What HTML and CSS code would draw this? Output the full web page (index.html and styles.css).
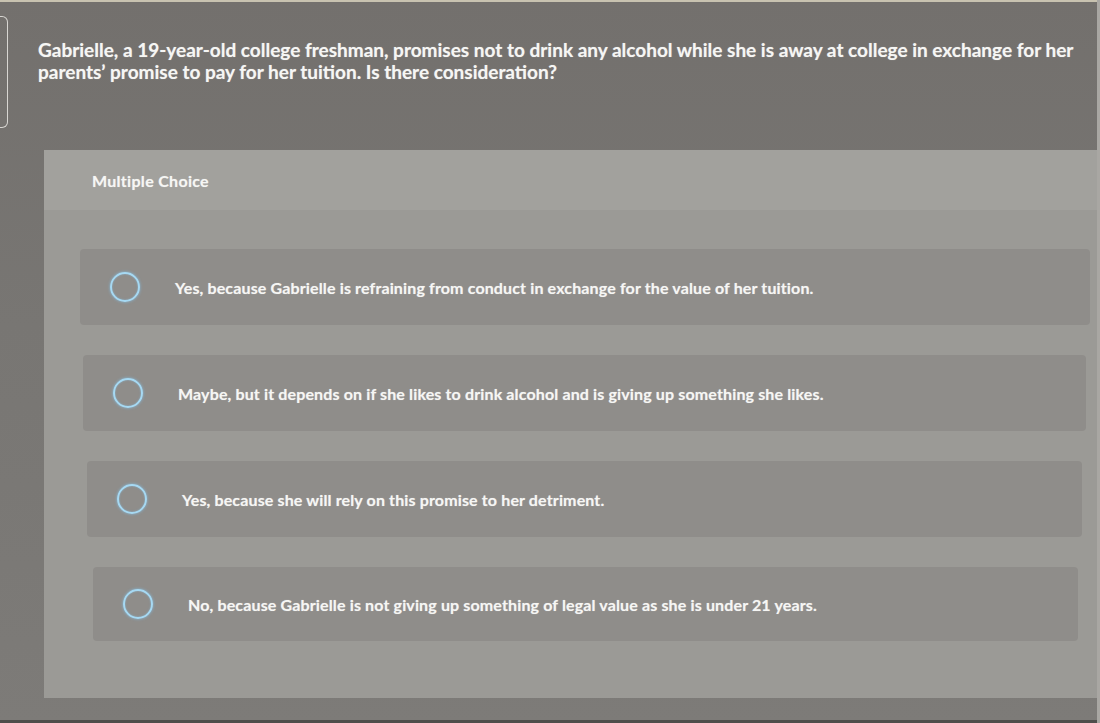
FILE: index.html
```html
<!DOCTYPE html>
<html lang="en">
<head>
<meta charset="utf-8">
<title>Multiple Choice</title>
<link rel="stylesheet" href="styles.css">
</head>
<body>
<div class="screen">
  <div class="top-edge"></div>
  <div class="header-row">
    <div class="tab"></div>
    <p class="question">Gabrielle, a 19-year-old college freshman, promises not to drink any alcohol while she is away at college in exchange for her parents’ promise to pay for her tuition. Is there consideration?</p>
  </div>
  <section class="panel">
    <div class="panel-head">Multiple Choice</div>
    <div class="options">
      <div class="option option-1"><span class="radio"></span><span class="label">Yes, because Gabrielle is refraining from conduct in exchange for the value of her tuition.</span></div>
      <div class="option option-2"><span class="radio"></span><span class="label">Maybe, but it depends on if she likes to drink alcohol and is giving up something she likes.</span></div>
      <div class="option option-3"><span class="radio"></span><span class="label">Yes, because she will rely on this promise to her detriment.</span></div>
      <div class="option option-4"><span class="radio"></span><span class="label">No, because Gabrielle is not giving up something of legal value as she is under 21 years.</span></div>
    </div>
  </section>
  <div class="bottom-edge"></div>
</div>
</body>
</html>
```

FILE: styles.css
```css
html, body {
  margin: 0;
  padding: 0;
}
body {
  width: 1100px;
  height: 723px;
  overflow: hidden;
  background: #6f6d6a;
  font-family: Lato, "Open Sans", "Liberation Sans", sans-serif;
  color: #f6f6f4;
}
.screen {
  width: 1097px;
  height: 723px;
  border-right: 3px solid #a9a7a3;
  background: linear-gradient(180deg, #73706d 0%, #787673 45%, #7d7b78 100%);
  display: flex;
  flex-direction: column;
}
.top-edge {
  height: 2px;
  background: #c8c2b0;
  flex: none;
}
.header-row {
  display: flex;
  height: 148px;
  flex: none;
}
.tab {
  flex: none;
  width: 7px;
  height: 110px;
  margin-top: 14px;
  border: 1.5px solid #d8d6d2;
  border-left: none;
  border-radius: 0 6px 6px 0;
}
.question {
  margin: 0 0 0 30px;
  padding-top: 37px;
  font-size: 19px;
  line-height: 22px;
  font-weight: 700;
  letter-spacing: 0;
  width: 1050px;
  text-shadow: 0 0 1px rgba(255,255,255,0.45);
}
.panel {
  margin-left: 44px;
  width: 1053px;
  height: 548px;
  flex: none;
  background: #9b9a96;
  display: flex;
  flex-direction: column;
}
.panel-head {
  height: 60px;
  flex: none;
  background: #a2a19d;
  display: flex;
  align-items: center;
  padding-left: 48px;
  font-size: 16px;
  font-weight: 700;
  letter-spacing: 0.3px;
  text-shadow: 0 0 1px rgba(255,255,255,0.45);
}
.options {
  display: flex;
  flex-direction: column;
  gap: 30px;
  padding-top: 39px;
}
.option {
  height: 76px;
  background: #8f8d8a;
  border-radius: 4px;
  display: flex;
  align-items: center;
}
.option-1 { margin: 0 7px 0 36px; }
.option-2 { margin: 0 11px 0 39px; }
.option-3 { margin: 0 15px 0 43px; }
.option-4 { margin: 0 19px 0 49px; height: 74px; }
.radio {
  flex: none;
  width: 26px;
  height: 26px;
  border: 2.5px solid #a6d9f3;
  border-radius: 50%;
  margin-left: 30px;
  box-shadow: 0 0 3px rgba(130,200,245,0.8), inset 0 0 2px rgba(130,200,245,0.6);
}
.label {
  margin-left: 35px;
  font-size: 16px;
  font-weight: 700;
  letter-spacing: 0.14px;
  text-shadow: 0 0 1px rgba(255,255,255,0.45);
}
.bottom-edge {
  flex: 1;
  border-bottom: 3px solid #4f4d4b;
}
```
